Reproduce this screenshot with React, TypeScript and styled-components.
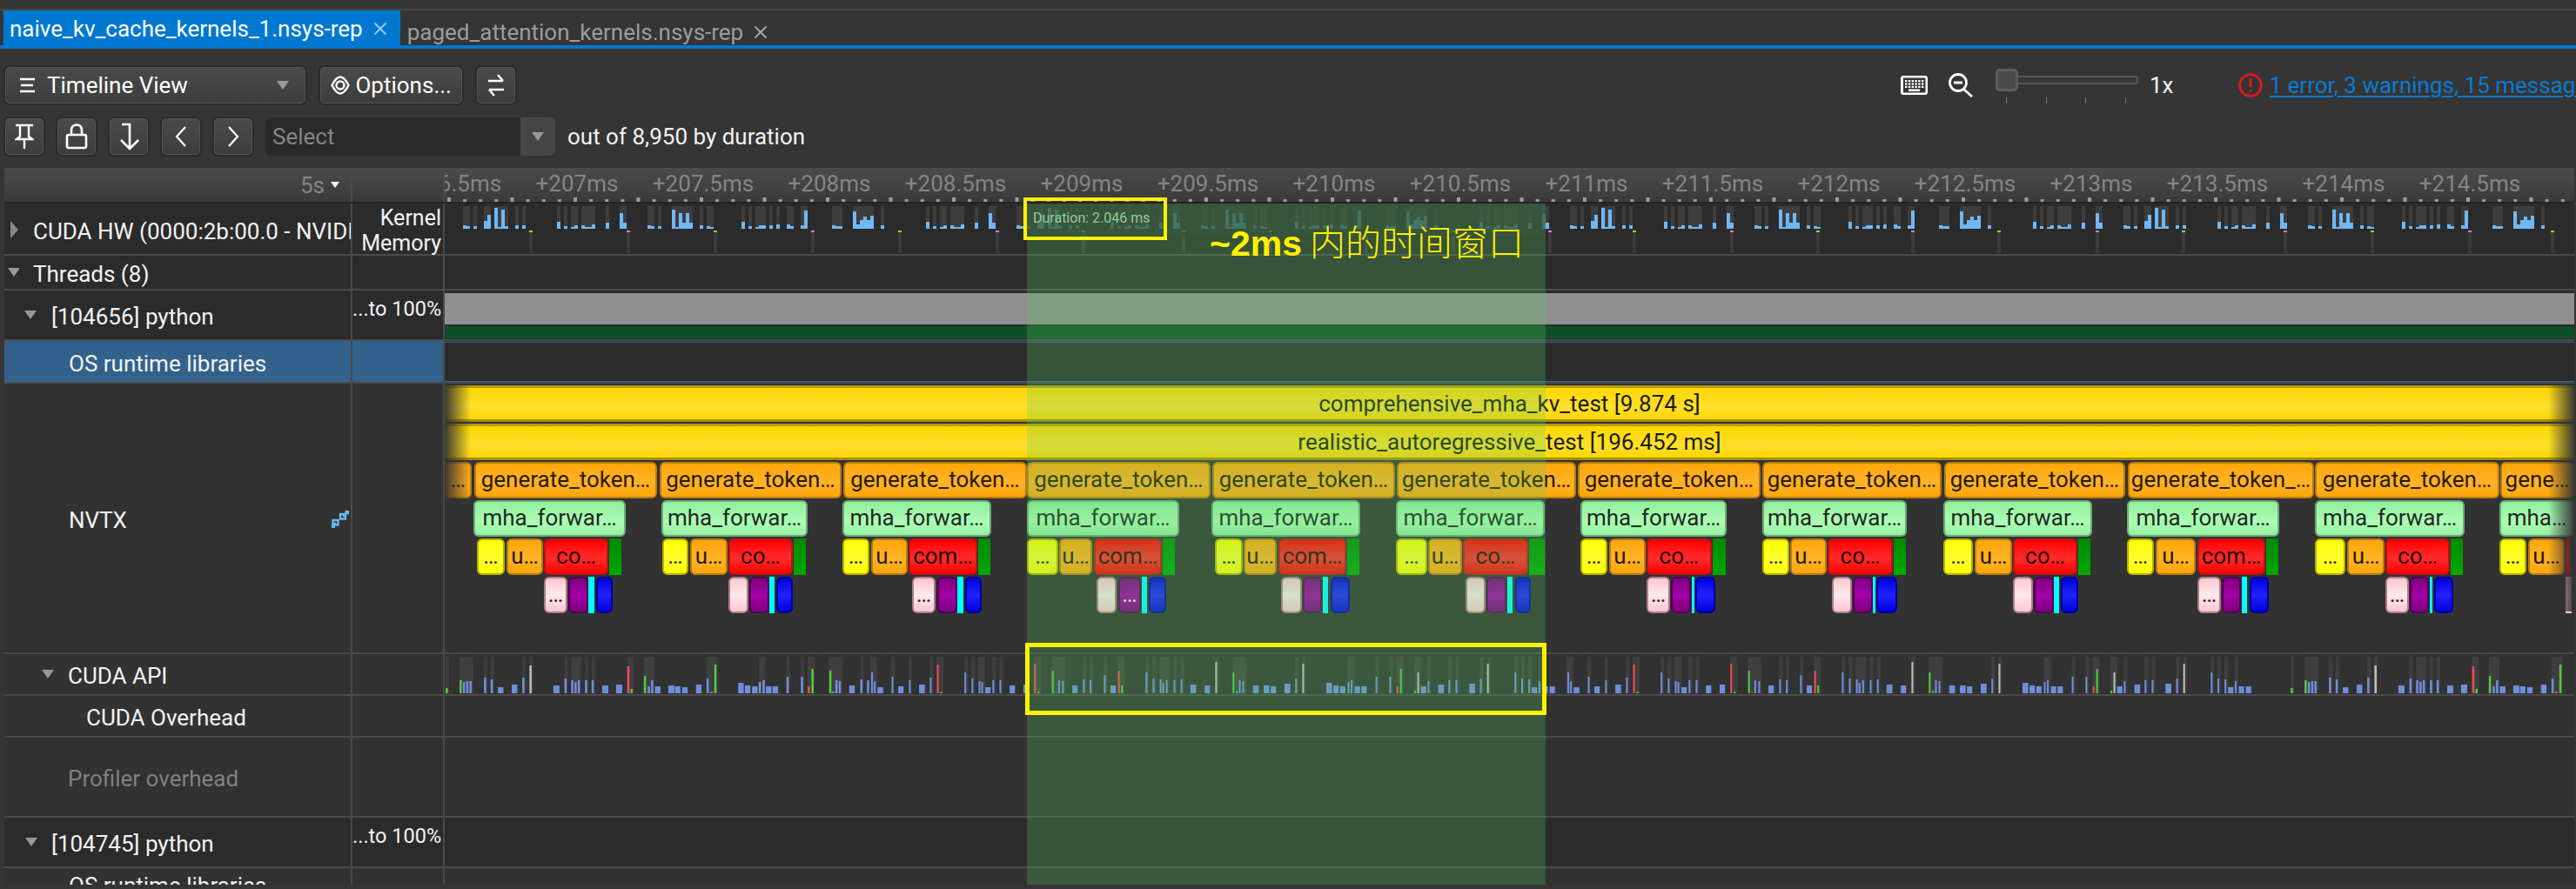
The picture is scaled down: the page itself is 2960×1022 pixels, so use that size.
import type { ReactNode } from "react";
import styled, { createGlobalStyle } from "styled-components";
import { X } from "lucide-react";

const GlobalStyle = createGlobalStyle`
  html, body {
    margin: 0;
    padding: 0;
    background: #353535;
    overflow: hidden;
  }
  * {
    box-sizing: border-box;
  }
`;

const LEFT = 511;

type Kind = "gen" | "mha" | "yel" | "org" | "red" | "grn" | "pnk" | "pur" | "cyn" | "blu" | "rdf" | "pkf";
type SliceData = [Kind, number, number, string?];

const KINDS: Record<Kind, { top: number; bg: string; border: string; color: string; flat?: boolean }> = {
  gen: { top: 90, bg: "linear-gradient(#ffa60a, #ffb326 55%, #ffa60a)", border: "#b97b12", color: "#2a1a00" },
  mha: { top: 134, bg: "linear-gradient(#8ff09c, #adfcb6 60%, #96f0a2)", border: "#6dab78", color: "#1f2a20" },
  yel: { top: 178, bg: "linear-gradient(#ffff00, #ffff30 55%, #ffff00)", border: "#b3b300", color: "#2a2a00" },
  org: { top: 178, bg: "linear-gradient(#ffa60a, #ffb326 55%, #ffa60a)", border: "#b97b12", color: "#2a1a00" },
  red: { top: 178, bg: "linear-gradient(#ff0000, #ff2c2c 55%, #ff0000)", border: "#b91414", color: "#2a0000" },
  rdf: { top: 178, bg: "linear-gradient(#ff0000, #ff2c2c 55%, #ff0000)", border: "transparent", color: "#000", flat: true },
  grn: { top: 178, bg: "linear-gradient(#008a00, #00a800)", border: "transparent", color: "#000", flat: true },
  pnk: { top: 222, bg: "linear-gradient(#ffc6d2, #ffe9ee 50%, #ffc6d2)", border: "#ab7c88", color: "#222" },
  pkf: { top: 222, bg: "linear-gradient(#ffc6d2, #ffe9ee 50%, #ffc6d2)", border: "transparent", color: "#222", flat: true },
  pur: { top: 222, bg: "linear-gradient(#7c007c, #a400a8 50%, #7c007c)", border: "#540054", color: "#eee" },
  cyn: { top: 222, bg: "#00ffff", border: "transparent", color: "#000", flat: true },
  blu: { top: 222, bg: "linear-gradient(#0000d8, #2222ff 50%, #0000d8)", border: "#00009c", color: "#fff" },
};

const GEN = [
  [511, 542, "…"], [545, 755], [758, 967], [969, 1180], [1180, 1391], [1393, 1603], [1605, 1811],
  [1813, 2023], [2025, 2231], [2234, 2442], [2445, 2659, "generate_token_…"], [2660, 2872], [2873, 2958, "gene…"],
] as [number, number, string?][];

const MHA = [
  [544, 719], [760, 928], [968, 1139], [1180, 1355], [1392, 1563], [1604, 1775], [1816, 1984],
  [2025, 2191], [2233, 2404], [2444, 2619], [2660, 2832], [2872, 2958, "mha…"],
] as [number, number, string?][];

// yellow, orange, red, green, pink, purple, cyan, blue
const GROUPS: number[][] = [
  [548, 580, 582, 624, 625, 699, 700, 714, 625, 652, 653, 676, 676, 683, 685, 704],
  [761, 791, 793, 836, 837, 911, 912, 926, 837, 860, 861, 884, 884, 890, 892, 911],
  [968, 999, 1001, 1043, 1044, 1123, 1124, 1138, 1048, 1075, 1077, 1100, 1100, 1107, 1109, 1128],
  [1180, 1216, 1217, 1255, 1257, 1335, 1336, 1350, 1260, 1283, 1285, 1311, 1312, 1318, 1320, 1340],
  [1396, 1428, 1429, 1467, 1469, 1547, 1548, 1562, 1472, 1496, 1497, 1519, 1520, 1526, 1529, 1551],
  [1604, 1640, 1641, 1680, 1681, 1756, 1757, 1775, 1684, 1707, 1708, 1731, 1732, 1738, 1741, 1759],
  [1816, 1847, 1849, 1891, 1892, 1967, 1968, 1983, 1892, 1919, 1920, 1943, 1944, 1947, 1948, 1971],
  [2025, 2056, 2057, 2099, 2100, 2175, 2176, 2190, 2105, 2128, 2129, 2152, 2152, 2155, 2156, 2180],
  [2233, 2267, 2269, 2312, 2313, 2387, 2388, 2402, 2313, 2336, 2337, 2360, 2360, 2366, 2368, 2388],
  [2444, 2475, 2477, 2523, 2525, 2603, 2604, 2618, 2525, 2552, 2553, 2575, 2576, 2582, 2585, 2607],
  [2660, 2695, 2697, 2740, 2741, 2815, 2816, 2830, 2741, 2768, 2769, 2791, 2792, 2795, 2797, 2819],
];
const RED_TEXT = ["co…", "co…", "com…", "com…", "com…", "co…", "co…", "co…", "co…", "com…", "co…"];
const PINK_DOTS = [0, 2, 6, 9, 10];

const buildSlices = () => {
  const out: SliceData[] = [];
  GEN.forEach((g) => out.push(["gen", g[0], g[1], g[2] ?? "generate_token…"]));
  MHA.forEach((m) => out.push(["mha", m[0], m[1], m[2] ?? "mha_forwar…"]));
  GROUPS.forEach((g, i) => {
    out.push(["yel", g[0], g[1], "…"]);
    out.push(["org", g[2], g[3], "u…"]);
    out.push(["red", g[4], g[5], RED_TEXT[i]]);
    out.push(["grn", g[6], g[7]]);
    out.push(["pnk", g[8], g[9], PINK_DOTS.includes(i) ? "…" : undefined]);
    out.push(["pur", g[10], g[11], i === 3 ? "…" : undefined]);
    out.push(["cyn", g[12], g[13]]);
    out.push(["blu", g[14], g[15]]);
  });
  out.push(["yel", 2872, 2903, "…"], ["org", 2905, 2947, "u…"], ["rdf", 2948, 2954], ["pkf", 2948, 2955]);
  return out;
};

const SLICES = buildSlices();

// measured from the left of the timeline row, in 1/3 px
const HW_BARS: number[][] = [
  [81, 93, 105], [93, 105, 108], [117, 129, 108], [153, 165, 90], [165, 177, 69], [189, 201, 45], [201, 213, 111],
  [213, 225, 51], [225, 237, 108], [261, 273, 105], [285, 297, 105], [405, 417, 93], [429, 441, 108], [453, 465, 111],
  [465, 477, 105], [489, 501, 105], [501, 525, 111], [525, 537, 102], [573, 585, 96], [621, 633, 63], [633, 645, 96],
  [717, 729, 105], [729, 741, 108], [753, 765, 108], [801, 813, 51], [813, 825, 111], [825, 837, 63], [837, 849, 96],
  [849, 861, 63], [861, 873, 96], [897, 909, 105], [921, 933, 108], [933, 945, 111], [1041, 1053, 93], [1065, 1077, 108],
  [1089, 1101, 111], [1101, 1125, 105], [1137, 1149, 105], [1161, 1173, 102], [1197, 1209, 102], [1209, 1221, 108],
  [1245, 1257, 105], [1257, 1269, 54], [1353, 1365, 105], [1365, 1389, 108], [1425, 1437, 57], [1437, 1449, 102],
  [1449, 1461, 87], [1461, 1473, 75], [1473, 1485, 87], [1485, 1497, 72], [1521, 1533, 105],
];
const HW_BANDS: number[][] = [
  [81, 105], [117, 129], [153, 177], [189, 237], [261, 273], [285, 297], [405, 417], [429, 441], [453, 477], [489, 537],
  [573, 585], [621, 645], [717, 741], [753, 765], [801, 873], [897, 909], [921, 945], [1041, 1053], [1065, 1077],
  [1089, 1125], [1137, 1149], [1161, 1173], [1197, 1221], [1245, 1269], [1353, 1389], [1425, 1497], [1521, 1533],
];
const MARKERS: [number, string][] = [
  [610, "g"], [722, "p"], [822, "g"], [934, "p"], [1034, "g"], [1146, "p"], [1245, "g"], [1360, "w"], [1460, "g"],
  [1570, "p"], [1670, "g"], [1781, "p"], [1878, "g"], [1990, "p"], [2089, "g"], [2198, "p"], [2297, "g"], [2410, "p"],
  [2509, "g"], [2626, "p"], [2726, "g"], [2838, "p"], [2933, "g"],
];

type ApiBar = [number, number, number, string?];
const API_A: ApiBar[] = [
  [803, 4, 6, "g"], [828, 4, 15, "g"], [834, 4, 13], [840, 4, 14], [846, 4, 14], [872, 4, 18], [884, 4, 16], [897, 10, 7],
  [922, 10, 10], [941, 4, 18], [954, 4, 32, "w"], [997, 11, 9], [1017, 4, 17], [1029, 4, 15], [1035, 4, 13], [1041, 4, 15],
  [1054, 4, 15], [1066, 4, 15], [1085, 11, 9], [1110, 11, 10], [1130, 4, 31, "r"], [1136, 4, 5, "g"], [1160, 4, 20, "g"],
  [1167, 4, 8], [1173, 4, 15], [1180, 10, 8], [1204, 11, 9], [1216, 10, 8], [1229, 10, 7], [1254, 10, 10], [1273, 4, 17],
  [1279, 5, 2, "r"], [1287, 4, 33, "g"], [1330, 10, 12], [1342, 10, 9], [1355, 10, 8], [1367, 4, 13], [1374, 4, 15],
  [1380, 10, 8], [1392, 10, 8], [1417, 4, 19], [1443, 4, 19], [1455, 4, 8, "r"], [1462, 4, 28, "g"], [1494, 4, 26, "g"],
  [1499, 4, 2], [1505, 4, 15], [1511, 4, 14], [1530, 10, 9], [1550, 4, 16], [1562, 4, 15],
];
const API_A_BANDS: number[][] = [
  [803, 6], [828, 25], [872, 6], [884, 6], [941, 6], [954, 6], [1017, 6], [1029, 18], [1054, 6], [1066, 6], [1130, 12],
  [1160, 19], [1273, 20], [1367, 12], [1417, 6], [1443, 6], [1455, 12], [1493, 25], [1550, 6],
];
const API_B: ApiBar[] = [
  [2, 4, 24], [8, 4, 14], [16, 13, 7], [48, 4, 19], [63, 12, 8], [87, 4, 15], [110, 13, 10], [134, 4, 18], [150, 4, 33, "r"],
  [158, 4, 2, "g"], [212, 4, 24], [228, 4, 17], [244, 4, 14], [250, 4, 13], [259, 12, 7], [275, 4, 15], [291, 4, 15],
  [314, 12, 9], [345, 12, 10], [369, 4, 34, "r"], [377, 4, 2, "g"], [409, 4, 26, "g"], [417, 2, 1, "g"], [423, 4, 15],
  [432, 4, 14], [455, 12, 9], [479, 4, 16], [494, 4, 15], [526, 4, 21], [541, 12, 9], [558, 4, 26, "r"], [565, 4, 9, "g"],
  [620, 4, 24], [636, 4, 17], [652, 4, 16], [658, 4, 12], [666, 4, 15], [683, 4, 15], [699, 4, 16], [721, 13, 10],
  [753, 12, 9], [777, 4, 36, "w"], [816, 4, 24, "g"], [824, 3, 3, "g"], [830, 4, 15], [838, 4, 14], [862, 13, 9],
  [886, 13, 9], [902, 12, 8], [933, 13, 11], [957, 4, 17], [973, 4, 34, "w"], [1027, 13, 12], [1043, 12, 9], [1058, 12, 8],
  [1075, 4, 13], [1082, 4, 15], [1091, 12, 8], [1106, 12, 8], [1138, 4, 19], [1169, 4, 19], [1185, 4, 8, "r"],
  [1193, 4, 28, "g"], [1225, 4, 3, "g"], [1232, 4, 24, "w"], [1240, 12, 8], [1255, 4, 14], [1279, 13, 10], [1302, 4, 15],
  [1318, 4, 15], [1349, 13, 11], [1373, 4, 17], [1389, 4, 34, "w"], [1451, 4, 24], [1466, 4, 17], [1482, 4, 16],
  [1490, 12, 7], [1505, 4, 14], [1514, 12, 8], [1530, 12, 8],
];
const API_B_BANDS: number[][] = [
  [0, 15], [47, 8], [86, 8], [134, 8], [149, 16], [212, 8], [228, 8], [243, 16], [275, 8], [291, 8], [369, 16], [409, 30],
  [479, 8], [494, 8], [526, 8], [557, 16], [620, 8], [636, 8], [651, 24], [683, 8], [699, 8], [777, 8], [816, 30], [957, 8],
  [973, 8], [1075, 16], [1138, 8], [1169, 8], [1185, 16], [1225, 16], [1255, 8], [1302, 8], [1318, 8], [1373, 8], [1389, 8],
  [1451, 8], [1466, 8], [1482, 8], [1505, 8],
];
const API_COLORS: Record<string, string> = { g: "#52c93f", r: "#ef4a4f", w: "#bdbdbd" };

const Page = styled.div`
  width: 2960px;
  height: 1022px;
  padding-top: 10px;
  overflow: hidden;
  background: #353535;
  color: #f2f2f2;
  font-family: Roboto, "Liberation Sans", sans-serif;
  font-size: 26px;
`;

const TabBar = styled.div`
  height: 46px;
  padding-left: 4px;
  display: flex;
  align-items: flex-start;
  border-top: 2px solid #454545;
  box-shadow: inset 0 -4px 0 #0078d0;
`;

const Tab = styled.div<{ $active?: boolean }>`
  height: 44px;
  display: flex;
  align-items: center;
  gap: 8px;
  white-space: nowrap;
  padding: ${(p) => (p.$active ? "0 11px 2px 7px" : "6px 0 0 8px")};
  background: ${(p) => (p.$active ? "#0078d0" : "transparent")};
  color: ${(p) => (p.$active ? "#fff" : "#9c9c9c")};
  svg {
    color: ${(p) => (p.$active ? "#9fcbf0" : "#a8a8a8")};
  }
`;

const Toolbar = styled.div`
  height: 44px;
  display: flex;
  align-items: center;
  padding-left: 5px;
  margin-top: 20px;
`;

const Toolbar2 = styled(Toolbar)`
  margin-top: 15px;
`;

const Button = styled.div<{ $w: number; $ml?: number }>`
  width: ${(p) => p.$w}px;
  height: 44px;
  margin-left: ${(p) => p.$ml ?? 0}px;
  flex-shrink: 0;
  display: flex;
  align-items: center;
  justify-content: center;
  border-radius: 6px;
  border: 2px solid #555;
  outline: 2px solid #2b2b2b;
  outline-offset: -1px;
  background: linear-gradient(#4a4a4a, #3d3d3d);
  color: #fff;
  white-space: nowrap;
`;

const ViewButton = styled(Button)`
  justify-content: flex-start;
  padding-left: 14px;
  gap: 12px;
`;

const Caret = styled.span<{ $color?: string; $ml?: number; $size?: number }>`
  width: 0;
  height: 0;
  margin-left: ${(p) => p.$ml ?? 0}px;
  border-left: ${(p) => p.$size ?? 7}px solid transparent;
  border-right: ${(p) => p.$size ?? 7}px solid transparent;
  border-top: ${(p) => (p.$size ?? 7) * 1.5}px solid ${(p) => p.$color ?? "#9a9a9a"};
`;

const SelectBox = styled.div`
  width: 333px;
  height: 44px;
  margin-left: 14px;
  display: flex;
  border-radius: 6px;
  overflow: hidden;
  background: #2a2a2a;
  color: #858585;
`;

const SelectText = styled.div`
  flex: 1;
  display: flex;
  align-items: center;
  padding-left: 8px;
`;

const SelectArrow = styled.div`
  width: 40px;
  display: flex;
  align-items: center;
  justify-content: center;
  background: #464646;
`;

const OutOf = styled.span`
  margin-left: 14px;
  white-space: nowrap;
`;

const RightTools = styled.div`
  margin-left: 1591px;
  display: flex;
  align-items: center;
  flex-shrink: 0;
  white-space: nowrap;
`;

const IconGap = styled.span<{ $w: number }>`
  width: ${(p) => p.$w}px;
`;

const Slider = styled.div`
  width: 164px;
  height: 40px;
  margin-left: 25px;
  margin-top: 1px;
  display: flex;
  flex-direction: column;
`;

const SliderTop = styled.div`
  height: 26px;
  display: flex;
  align-items: center;
`;

const SliderThumb = styled.div`
  width: 26px;
  height: 26px;
  border-radius: 5px;
  background: #4a4a4a;
  border: 3px solid #5c5c5c;
`;

const SliderTrack = styled.div`
  width: 138px;
  height: 10px;
  background: #393939;
  border: 2px solid #585858;
  border-left: none;
  border-radius: 0 3px 3px 0;
`;

const SliderTicks = styled.div`
  height: 7px;
  margin-top: 7px;
  padding: 0 14px 0 12px;
  display: flex;
  justify-content: space-between;
  i {
    width: 1px;
    background: #777;
  }
`;

const Zoom = styled.span`
  margin-left: 13px;
`;

const ErrorLink = styled.a`
  margin-left: 8px;
  color: #0a7bd3;
  text-decoration: underline;
  text-decoration-thickness: 2px;
  text-underline-offset: 3px;
`;

const Table = styled.div`
  position: relative;
  width: 2953px;
  height: 824px;
  margin-top: 14px;
  margin-left: 5px;
  overflow: hidden;
`;

const Row = styled.div<{ $h: number; $dark?: boolean }>`
  height: ${(p) => p.$h}px;
  display: grid;
  grid-template-columns: 400px 106px 2447px;
  border-bottom: 2px solid #4a4a4a;
  background: ${(p) => (p.$dark ? "#2b2b2b" : "#323232")};
`;

const HeaderRow = styled(Row)`
  border-bottom: 2px solid #232323;
  background: linear-gradient(#4b4b4b, #3a3a3a);
  color: #858585;
`;

const NameCell = styled.div<{ $indent: number; $selected?: boolean; $muted?: boolean }>`
  position: relative;
  display: flex;
  align-items: center;
  padding-left: ${(p) => p.$indent}px;
  padding-top: 4px;
  overflow: hidden;
  white-space: nowrap;
  border-right: 2px solid #4a4a4a;
  background: ${(p) => (p.$selected ? "#32628c" : "transparent")};
  color: ${(p) => (p.$muted ? "#808080" : "#f2f2f2")};
`;

const RangeCell = styled.div`
  display: flex;
  align-items: center;
  justify-content: flex-end;
  gap: 7px;
  padding-right: 13px;
  border-right: 2px solid #4a4a4a;
`;

const SideCell = styled.div<{ $selected?: boolean }>`
  padding: 7px 2px 0 0;
  font-size: 23.5px;
  text-align: right;
  white-space: nowrap;
  border-right: 2px solid #4a4a4a;
  background: ${(p) => (p.$selected ? "#32628c" : "transparent")};
`;

const KernelLabel = styled.div`
  padding: 2px 2px 0 0;
  font-size: 25px;
  line-height: 29px;
  text-align: right;
  border-right: 2px solid #4a4a4a;
`;

const Arrow = styled.span<{ $x: number }>`
  position: absolute;
  left: ${(p) => p.$x}px;
  top: 50%;
  transform: translateY(-50%);
  display: flex;
`;

const ArrowRight = styled.span`
  width: 0;
  height: 0;
  border-top: 10px solid transparent;
  border-bottom: 10px solid transparent;
  border-left: 9px solid #8a8a8a;
`;

const Lane = styled.div`
  position: relative;
  overflow: hidden;
`;

const SelectedLane = styled(Lane)`
  margin: 1px 0 0;
  border-top: 1px solid #2e6a9b;
  border-bottom: 1px solid #2e6a9b;
  background: #2b2b2b;
`;

const RulerLabel = styled.span`
  position: absolute;
  top: 3px;
  transform: translateX(-50%);
  white-space: nowrap;
  color: #858585;
`;

const Chart = styled.svg`
  position: absolute;
  left: 0;
  top: 0;
  display: block;
`;

const CpuBar = styled.div`
  height: 36px;
  margin-top: 3px;
  background: #8f8f8f;
`;

const CpuGreen = styled.div`
  height: 14px;
  margin-top: 2px;
  background: #0e4f26;
`;

const Band = styled.div<{ $top: number }>`
  position: absolute;
  left: 0;
  right: 0;
  top: ${(p) => p.$top}px;
  height: 42px;
  display: flex;
  align-items: center;
  justify-content: center;
  color: #1c1c00;
  background: linear-gradient(#ffd700, #ffe02e 60%, #ffd700);
  border-top: 3px solid #b89c08;
  border-bottom: 3px solid #a58d10;
`;

const Slice = styled.div<{ $kind: Kind }>`
  position: absolute;
  height: 42px;
  top: ${(p) => KINDS[p.$kind].top}px;
  display: flex;
  align-items: center;
  justify-content: center;
  overflow: hidden;
  white-space: nowrap;
  color: ${(p) => KINDS[p.$kind].color};
  background: ${(p) => KINDS[p.$kind].bg};
  border: ${(p) => (KINDS[p.$kind].flat ? "none" : `2px solid ${KINDS[p.$kind].border}`)};
  border-radius: ${(p) => (KINDS[p.$kind].flat ? 0 : 6)}px;
  padding-bottom: 2px;
`;

const EdgeFade = styled.div<{ $side: "left" | "right" }>`
  position: absolute;
  top: 2px;
  bottom: 47px;
  width: 30px;
  ${(p) => p.$side}: 0;
  background: linear-gradient(to ${(p) => p.$side}, rgba(50, 50, 50, 0), rgba(50, 50, 50, 0.95));
`;

const ExpandIcon = styled.svg`
  position: absolute;
  right: 2px;
  top: 146px;
`;

const Selection = styled.div`
  position: absolute;
  left: 1175px;
  top: 41px;
  width: 596px;
  bottom: 0;
  background: rgba(86, 204, 98, 0.25);
`;

// the charts under the top of the selection are nearly hidden in the app
const SelectionCap = styled.div`
  position: absolute;
  left: 1175px;
  top: 41px;
  width: 596px;
  height: 37px;
  background: rgba(56, 86, 60, 0.72);
`;

const DurationBox = styled.div`
  position: absolute;
  left: 1171px;
  top: 34px;
  width: 165px;
  height: 49px;
  padding: 10px 0 0 7px;
  border: 4px solid #fff200;
  color: #95cc9b;
  font-size: 16px;
  white-space: nowrap;
`;

const Note = styled.div`
  position: absolute;
  left: 1385px;
  top: 58px;
  color: #fff200;
  font-size: 41px;
  line-height: 50px;
  white-space: nowrap;
  font-family: "Noto Sans CJK SC", sans-serif;
  font-weight: 300;
  b {
    font-family: "Liberation Sans", sans-serif;
    font-weight: 700;
  }
`;

const ApiBox = styled.div`
  position: absolute;
  left: 1173px;
  top: 546px;
  width: 599px;
  height: 83px;
  border: 5px solid #fff200;
`;

const Ticks = () => {
  const items = [];
  for (let i = 0; 516 + i * 18.125 < 2958; i++) {
    const x = 516 + i * 18.125 - LEFT;
    const major = i % 4 === 0;
    items.push(<rect key={i} x={x - 2} y={major ? 34 : 36} width={4} height={major ? 6 : 4} fill="#9c9c9c" />);
  }
  return (
    <Chart width={2447} height={41}>
      {items}
    </Chart>
  );
};

const HwChart = () => {
  const period = 1908;
  const bars = [...HW_BARS, ...HW_BARS.filter((b) => b[0] >= 405 && b[0] < 700).map((b) => [b[0] + 1272, b[1] + 1272, b[2]])];
  const bands = [...HW_BANDS, ...HW_BANDS.filter((b) => b[0] >= 405 && b[0] < 700).map((b) => [b[0] + 1272, b[1] + 1272])];
  const off = 505 - LEFT;
  const nodes = [];
  for (let k = 0; k < 5; k++) {
    const shift = k * period;
    bands.forEach((b, i) =>
      nodes.push(<rect key={`b${k}-${i}`} x={off + (b[0] + shift) / 3} y={3} width={(b[1] - b[0]) / 3} height={26} fill="#3d3d3d" />)
    );
    bars.forEach((b, i) =>
      nodes.push(
        <rect key={`v${k}-${i}`} x={off + (b[0] + shift) / 3} y={b[2] / 3 - 10} width={(b[1] - b[0]) / 3} height={(117 - b[2]) / 3} fill="#6fb8f5" />
      )
    );
  }
  MARKERS.forEach(([x, c], i) => {
    nodes.push(<rect key={`d${i}`} x={x - LEFT - 2} y={33} width={4} height={24} fill="#3b3b3b" />);
    nodes.push(
      <rect key={`m${i}`} x={x - LEFT - 2} y={31} width={4} height={2} fill={c === "g" ? "#7cf000" : c === "p" ? "#e070f0" : "#999"} />
    );
  });
  return (
    <Chart width={2447} height={58}>
      {nodes}
    </Chart>
  );
};

const ApiChart = () => {
  const nodes: ReactNode[] = [];
  const put = (bars: ApiBar[], bands: number[][], scale: number, origin: number, key: string) => {
    bands.forEach((b, i) =>
      nodes.push(<rect key={`${key}b${i}`} x={origin + b[0] / scale} y={3} width={b[1] / scale} height={42} fill="#3f3f3f" />)
    );
    bars.forEach((b, i) =>
      nodes.push(
        <rect
          key={`${key}v${i}`}
          x={origin + b[0] / scale}
          y={45 - b[2]}
          width={b[1] / scale}
          height={b[2]}
          fill={b[3] ? API_COLORS[b[3]] : "#6e8edb"}
        />
      )
    );
  };
  put(API_A, API_A_BANDS, 1.568, -LEFT, "a");
  put(API_B, API_B_BANDS, 1.96, 1000 - LEFT, "c");
  put(API_B, API_B_BANDS, 1.96, 1800 - LEFT, "d");
  put(API_A, API_A_BANDS, 1.568, 2120 - LEFT, "e");
  return (
    <Chart width={2447} height={46}>
      {nodes}
    </Chart>
  );
};

const ListIcon = () => (
  <svg width="21" height="22" viewBox="0 0 21 22" fill="none" stroke="#fff" strokeWidth="2.5">
    <path d="M2 4H19M3 11H17M2 18H19" />
  </svg>
);

const EyeIcon = () => (
  <svg width="22" height="26" viewBox="0 0 22 26" fill="none" stroke="#fff" strokeWidth="2.4">
    <path d="M1.5 13C5 6 8 3.5 11 3.5S17 6 20.5 13C17 20 14 22.5 11 22.5S5 20 1.5 13Z" />
    <circle cx="11" cy="13" r="4.5" />
  </svg>
);

const SwapIcon = () => (
  <svg width="20" height="30" viewBox="0 0 20 30" fill="none" stroke="#fff" strokeWidth="2.4">
    <path d="M1 10H18M12 3L18 10M19 20H2M8 27L2 20" />
  </svg>
);

const PinIcon = () => (
  <svg width="22" height="30" viewBox="0 0 22 30" fill="none" stroke="#fff" strokeWidth="2.4">
    <path d="M1 2H21M6 2V15L2 18H20L16 15V2M11 18V29" />
  </svg>
);

const LockIcon = () => (
  <svg width="26" height="30" viewBox="0 0 26 30" fill="none" stroke="#fff" strokeWidth="2.6">
    <rect x="2" y="13" width="22" height="15" rx="2" />
    <path d="M7 13V8C7 3 10 1.5 13 1.5S19 3 19 8V13" />
  </svg>
);

const TurnDownIcon = () => (
  <svg width="24" height="32" viewBox="0 0 24 32" fill="none" stroke="#fff" strokeWidth="2.6">
    <path d="M4 2H13V29M3 20L13 30L23 20" />
  </svg>
);

const ChevronIcon = ({ flip }: { flip?: boolean }) => (
  <svg width="16" height="24" viewBox="0 0 16 24" fill="none" stroke="#fff" strokeWidth="2.2">
    <path d={flip ? "M3 1L13 12L3 23" : "M13 1L3 12L13 23"} />
  </svg>
);

const KeyboardIcon = () => (
  <svg width="31" height="22" viewBox="0 0 31 22" fill="#fff">
    <path fillRule="evenodd" d="M3 0H28A3 3 0 0 1 31 3V19A3 3 0 0 1 28 22H3A3 3 0 0 1 0 19V3A3 3 0 0 1 3 0ZM3 2.500V19.500H28.500V2.500Z" />
    {[0, 1, 2].map((r) =>
      [0, 1, 2, 3, 4, 5].map((c) => <rect key={`${r}-${c}`} x={5 + c * 3.8} y={5 + r * 3.4} width="2.4" height="2.2" />)
    )}
    <rect x="9" y="15.500" width="13" height="2.500" />
  </svg>
);

const ZoomOutIcon = () => (
  <svg width="30" height="28" viewBox="0 0 30 28" fill="none" stroke="#fff" strokeWidth="2.8">
    <circle cx="12" cy="11" r="9.500" />
    <path d="M7 11H17M19 19L28 27" />
  </svg>
);

const ErrorIcon = () => (
  <svg width="28" height="28" viewBox="0 0 28 28" fill="none" stroke="#e3171f" strokeWidth="2.8">
    <circle cx="14" cy="14" r="12.300" />
    <path d="M14 6.500V16M14 19V21.500" />
  </svg>
);

const RULER = [206.5, 207, 207.5, 208, 208.5, 209, 209.5, 210, 210.5, 211, 211.5, 212, 212.5, 213, 213.5, 214, 214.5];

export default function App() {
  return (
    <Page>
      <GlobalStyle />
      <TabBar>
        <Tab $active>
          naive_kv_cache_kernels_1.nsys-rep
          <X size={24} strokeWidth={1.8} />
        </Tab>
        <Tab>
          paged_attention_kernels.nsys-rep
          <X size={24} strokeWidth={1.8} />
        </Tab>
      </TabBar>

      <Toolbar>
        <ViewButton $w={347}>
          <ListIcon />
          Timeline View
          <Caret $ml={90} />
        </ViewButton>
        <Button $w={165} $ml={15}>
          <EyeIcon />
          &nbsp;Options...
        </Button>
        <Button $w={46} $ml={15}>
          <SwapIcon />
        </Button>
        <RightTools>
          <KeyboardIcon />
          <IconGap $w={23} />
          <ZoomOutIcon />
          <Slider>
            <SliderTop>
              <SliderThumb />
              <SliderTrack />
            </SliderTop>
            <SliderTicks>
              <i />
              <i />
              <i />
              <i />
            </SliderTicks>
          </Slider>
          <Zoom>1x</Zoom>
          <IconGap $w={74} />
          <ErrorIcon />
          <ErrorLink>1 error, 3 warnings, 15 messages</ErrorLink>
        </RightTools>
      </Toolbar>

      <Toolbar2>
        <Button $w={46}>
          <PinIcon />
        </Button>
        <Button $w={46} $ml={14}>
          <LockIcon />
        </Button>
        <Button $w={46} $ml={14}>
          <TurnDownIcon />
        </Button>
        <Button $w={46} $ml={14}>
          <ChevronIcon />
        </Button>
        <Button $w={46} $ml={14}>
          <ChevronIcon flip />
        </Button>
        <SelectBox>
          <SelectText>Select</SelectText>
          <SelectArrow>
            <Caret />
          </SelectArrow>
        </SelectBox>
        <OutOf>out of 8,950 by duration</OutOf>
      </Toolbar2>

      <Table>
        <HeaderRow $h={41}>
          <RangeCell>
            5s
            <Caret $color="#fff" $size={5} />
          </RangeCell>
          <RangeCell />
          <Lane>
            {RULER.map((t) => (
              <RulerLabel key={t} style={{ left: 1243 + (t - 209) * 290 - LEFT }}>
                +{t}ms
              </RulerLabel>
            ))}
            <Ticks />
          </Lane>
        </HeaderRow>

        <Row $h={60} $dark>
          <NameCell $indent={33}>
            <Arrow $x={7}>
              <ArrowRight />
            </Arrow>
            CUDA HW (0000:2b:00.0 - NVIDIA
          </NameCell>
          <KernelLabel>
            Kernel
            <br />
            Memory
          </KernelLabel>
          <Lane>
            <HwChart />
          </Lane>
        </Row>

        <Row $h={40} $dark>
          <NameCell $indent={33}>
            <Arrow $x={4}>
              <Caret />
            </Arrow>
            Threads (8)
          </NameCell>
          <SideCell />
          <Lane />
        </Row>

        <Row $h={58} $dark>
          <NameCell $indent={54}>
            <Arrow $x={23}>
              <Caret />
            </Arrow>
            [104656] python
          </NameCell>
          <SideCell>...to 100%</SideCell>
          <Lane>
            <CpuBar />
            <CpuGreen />
          </Lane>
        </Row>

        <Row $h={49}>
          <NameCell $indent={74} $selected>
            OS runtime libraries
          </NameCell>
          <SideCell $selected />
          <SelectedLane />
        </Row>

        <Row $h={311}>
          <NameCell $indent={74}>
            NVTX
            <ExpandIcon width="20" height="20" viewBox="0 0 20 20" fill="none" stroke="#6ab7f0" strokeWidth="2.4">
              <path d="M10 4H16V9.500H10ZM13 6.500L18.500 1M15.500 1H19V4.500" />
              <path d="M1.500 11H7.500V16.500H1.500ZM4.500 14L1 19M1 16V19H4" />
            </ExpandIcon>
          </NameCell>
          <SideCell />
          <Lane>
            <Band $top={2}>comprehensive_mha_kv_test [9.874 s]</Band>
            <Band $top={46}>realistic_autoregressive_test [196.452 ms]</Band>
            {SLICES.map(([kind, x0, x1, text], i) => (
              <Slice key={i} $kind={kind} style={{ left: x0 - LEFT, width: x1 - x0 }}>
                {text}
              </Slice>
            ))}
            <EdgeFade $side="left" />
            <EdgeFade $side="right" />
          </Lane>
        </Row>

        <Row $h={48}>
          <NameCell $indent={73}>
            <Arrow $x={43}>
              <Caret />
            </Arrow>
            CUDA API
          </NameCell>
          <SideCell />
          <Lane>
            <ApiChart />
          </Lane>
        </Row>

        <Row $h={48}>
          <NameCell $indent={94}>CUDA Overhead</NameCell>
          <SideCell />
          <Lane />
        </Row>

        <Row $h={92}>
          <NameCell $indent={73} $muted>
            Profiler overhead
          </NameCell>
          <SideCell />
          <Lane />
        </Row>

        <Row $h={58} $dark>
          <NameCell $indent={54}>
            <Arrow $x={24}>
              <Caret />
            </Arrow>
            [104745] python
          </NameCell>
          <SideCell>...to 100%</SideCell>
          <Lane />
        </Row>

        <Row $h={38}>
          <NameCell $indent={74}>OS runtime libraries</NameCell>
          <SideCell />
          <Lane />
        </Row>

        <Selection />
        <SelectionCap />
        <DurationBox>Duration: 2.046 ms</DurationBox>
        <Note>
          <b>~2ms</b> 内的时间窗口
        </Note>
        <ApiBox />
      </Table>
    </Page>
  );
}
